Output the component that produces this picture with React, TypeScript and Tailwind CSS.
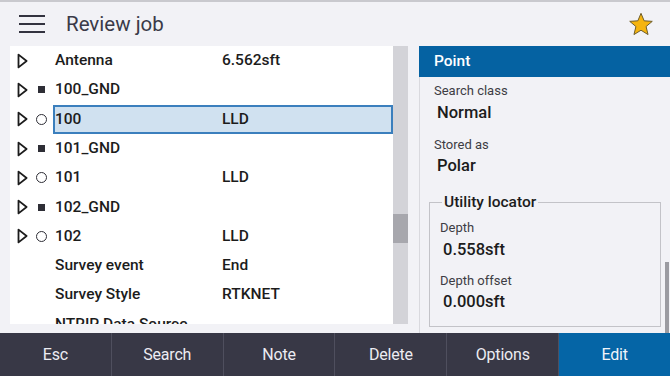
import React from 'react';

type Row = {
  name: string;
  value?: string;
  expand?: boolean;
  mark?: 'square' | 'circle';
  selected?: boolean;
};

const rows: Row[] = [
  { name: 'Antenna', value: '6.562sft', expand: true },
  { name: '100_GND', expand: true, mark: 'square' },
  { name: '100', value: 'LLD', expand: true, mark: 'circle', selected: true },
  { name: '101_GND', expand: true, mark: 'square' },
  { name: '101', value: 'LLD', expand: true, mark: 'circle' },
  { name: '102_GND', expand: true, mark: 'square' },
  { name: '102', value: 'LLD', expand: true, mark: 'circle' },
  { name: 'Survey event', value: 'End' },
  { name: 'Survey Style', value: 'RTKNET' },
  { name: 'NTRIP Data Source' },
];

const buttons = ['Esc', 'Search', 'Note', 'Delete', 'Options'];

function Triangle() {
  return (
    <svg width="11" height="16" viewBox="0 0 11 16">
      <path d="M1.5 1.6 L9.6 8 L1.5 14.4 Z" fill="none" stroke="#1c1c1c" strokeWidth="1.8" strokeLinejoin="round" />
    </svg>
  );
}

function RowItem({ row }: { row: Row }) {
  return (
    <div className="flex h-[29.3px] shrink-0 items-center">
      <div className="flex w-[21px] pl-[7px]">{row.expand && <Triangle />}</div>
      <div className="flex w-[20px] items-center justify-center">
        {row.mark === 'square' && <div className="h-[7px] w-[7px] bg-[#2e2e36]" />}
        {row.mark === 'circle' && (
          <div className="h-[11px] w-[11px] rounded-full border-[1.5px] border-[#2e2e36]" />
        )}
      </div>
      <div
        className={
          row.selected
            ? 'ml-[2px] flex h-[29px] flex-1 items-center border-2 border-[#3b7fbd] bg-[#d0e1f0]'
            : 'ml-[2px] flex flex-1 items-center pl-[2px]'
        }
      >
        <span className="w-[167px] whitespace-nowrap font-medium">{row.name}</span>
        <span className="font-medium">{row.value}</span>
      </div>
    </div>
  );
}

export default function App() {
  return (
    <div
      className="flex h-[376px] w-[670px] flex-col overflow-hidden border-t-2 border-[#c9c9ce] bg-[#f2f2f6] text-[15.5px] text-[#1c1c1c]"
      style={{ fontFamily: 'Roboto, "Noto Sans", sans-serif' }}
    >
      {/* header */}
      <div className="flex h-[44px] shrink-0 items-center">
        <div className="ml-[19px] flex w-[26px] flex-col gap-[5.5px]">
          <div className="h-[2.5px] bg-[#33333f]" />
          <div className="h-[2.5px] bg-[#33333f]" />
          <div className="h-[2.5px] bg-[#33333f]" />
        </div>
        <div className="ml-[21px] text-[20.5px] text-[#3a3a48]">Review job</div>
        <div className="ml-auto mr-[16px] mt-[1px]">
          <svg width="26" height="25" viewBox="0 0 24 23">
            <path
              d="M12 1.2 L14.9 8.1 L22.4 8.6 L16.7 13.4 L18.5 20.8 L12 16.8 L5.5 20.8 L7.3 13.4 L1.6 8.6 L9.1 8.1 Z"
              fill="#f5b40f"
              stroke="#6a5a2a"
              strokeWidth="0.9"
              strokeLinejoin="round"
            />
          </svg>
        </div>
      </div>

      {/* body */}
      <div className="flex min-h-0 flex-1">
        <div className="mb-[9px] ml-[10px] flex w-[398px] shrink-0 bg-white">
          <div className="flex min-w-0 flex-1 flex-col overflow-hidden">
            {rows.map((r) => (
              <RowItem key={r.name} row={r} />
            ))}
          </div>
          <div className="flex w-[15px] flex-col bg-[#d3d3d8]">
            <div className="mt-[168px] h-[29px] bg-[#a7a7ad]" />
          </div>
        </div>

        <div className="ml-[11px] flex min-w-0 flex-1 flex-col">
          <div className="flex h-[31px] shrink-0 items-center bg-[#0562a2] pl-[15px] text-[15.5px] font-medium text-white">
            Point
          </div>
          <div className="flex min-h-0 flex-1 border-l border-[#d9d9de]">
            <div className="flex min-w-0 flex-1 flex-col pl-[14px]">
              <div className="mt-[4px] text-[13px] text-[#3d3d44]">Search class</div>
              <div className="ml-[3px] text-[16.5px] font-medium leading-[24px]">Normal</div>
              <div className="mt-[10px] text-[13px] text-[#3d3d44]">Stored as</div>
              <div className="ml-[3px] text-[16.5px] font-medium leading-[24px]">Polar</div>
              <fieldset className="mb-[6px] ml-[-5px] mr-[3px] mt-[13px] flex-1 border border-[#c3c3c8] pl-[10px] pr-[8px]">
                <legend className="ml-[2px] px-[2px] text-[15.5px] font-medium">Utility locator</legend>
                <div className="mt-[4px] text-[13px] text-[#3d3d44]">Depth</div>
                <div className="ml-[3px] text-[16.5px] font-medium leading-[24px]">0.558sft</div>
                <div className="mt-[9px] text-[13px] text-[#3d3d44]">Depth offset</div>
                <div className="ml-[3px] text-[16.5px] font-medium leading-[24px]">0.000sft</div>
              </fieldset>
            </div>
            <div className="flex w-[6px] flex-col">
              <div className="ml-[1px] mt-[185px] w-[4px] flex-1 bg-[#9b9ba1]" />
            </div>
          </div>
        </div>
      </div>

      {/* toolbar */}
      <div className="flex h-[43px] shrink-0 bg-[#383846]">
        {buttons.map((b) => (
          <div
            key={b}
            className="flex flex-1 items-center justify-center border-r border-[#4f4f5e] text-[16px] tracking-[-0.2px] text-[#ececf2]"
          >
            {b}
          </div>
        ))}
        <div className="flex flex-1 items-center justify-center bg-[#0565a6] text-[16px] tracking-[-0.2px] text-[#f0f4fa]">
          Edit
        </div>
      </div>
    </div>
  );
}
